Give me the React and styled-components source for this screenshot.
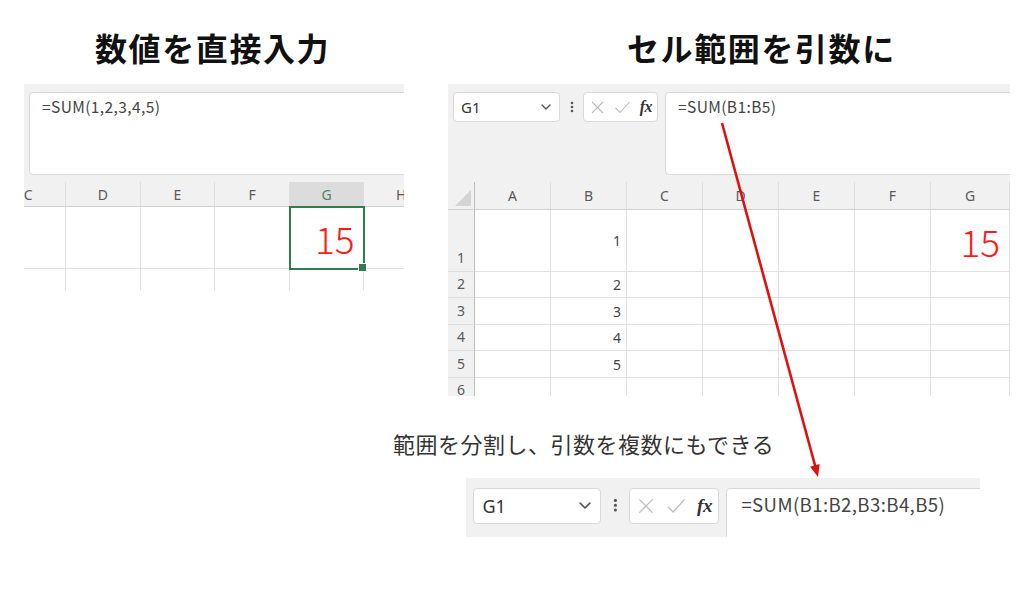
import React from 'react';
import styled, { createGlobalStyle } from 'styled-components';

const Global = createGlobalStyle`
  html, body { margin: 0; padding: 0; background: #fff; }
  body { font-family: "Noto Sans", "Noto Sans CJK JP", sans-serif; }
  * { box-sizing: border-box; }
`;

const Page = styled.div`
  position: relative;
  width: 1024px;
  height: 597px;
  overflow: hidden;
  background: #fff;
  display: flex;
  flex-direction: column;
`;

const TopRow = styled.div`
  display: flex;
  padding-left: 24px;
  gap: 44px;
`;

const Column = styled.div`
  width: ${(p) => p.$w}px;
  display: flex;
  flex-direction: column;
`;

const Title = styled.h1`
  margin: 0;
  height: 84px;
  padding-top: 10px;
  padding-left: ${(p) => p.$indent}px;
  display: flex;
  align-items: center;
  font-family: "Noto Sans CJK JP", sans-serif;
  font-weight: 700;
  font-size: 32px;
  letter-spacing: 1.6px;
  color: #111;
  white-space: nowrap;
`;

const Panel = styled.div`
  background: #f1f1f1;
  overflow: hidden;
  width: ${(p) => p.$w}px;
  height: ${(p) => p.$h}px;
`;

const FormulaArea = styled.div`
  display: flex;
  align-items: flex-start;
  padding: ${(p) => 8 * p.$s}px 0 ${(p) => p.$gapBottom}px ${(p) => p.$left}px;
`;

const NameBox = styled.div`
  flex: none;
  width: ${(p) => 107 * p.$s}px;
  height: ${(p) => 30 * p.$s}px;
  background: #fff;
  border: 1px solid #d9d9d9;
  border-radius: 4px;
  display: flex;
  align-items: center;
  justify-content: space-between;
  padding: 0 ${(p) => 8 * p.$s}px 0 ${(p) => 7 * p.$s}px;
  font-size: ${(p) => 15 * p.$s}px;
  color: #333;
`;

const Kebab = styled.div`
  flex: none;
  width: ${(p) => 23 * p.$s}px;
  height: ${(p) => 30 * p.$s}px;
  display: flex;
  align-items: center;
  justify-content: center;
`;

const FuncBox = styled.div`
  flex: none;
  width: ${(p) => 75 * p.$s}px;
  height: ${(p) => 30 * p.$s}px;
  background: #fff;
  border: 1px solid #d9d9d9;
  border-radius: 4px;
  display: flex;
  align-items: center;
  justify-content: space-between;
  padding: 0 ${(p) => 5 * p.$s}px 0 ${(p) => 6 * p.$s}px;
`;

const Fx = styled.span`
  font-family: "Liberation Serif", serif;
  font-style: italic;
  font-weight: 700;
  font-size: ${(p) => 16 * p.$s}px;
  color: #333;
  letter-spacing: -0.5px;
`;

const FormulaBox = styled.div`
  flex: 1;
  min-width: 0;
  margin-left: ${(p) => p.$ml}px;
  margin-right: -12px;
  height: ${(p) => p.$h}px;
  background: #fff;
  border: 1px solid #d9d9d9;
  border-radius: 4px;
  padding: ${(p) => 2 * p.$s}px 0 0 ${(p) => 12 * p.$s}px;
  font-family: "Noto Sans CJK JP", sans-serif;
  font-size: ${(p) => 15.5 * p.$s}px;
  line-height: ${(p) => 22 * p.$s}px;
  letter-spacing: 0.4px;
  color: #444;
  white-space: nowrap;
`;

const Sheet = styled.div`
  display: grid;
  grid-template-columns: ${(p) => p.$cols};
  grid-template-rows: ${(p) => p.$rows};
  margin-left: ${(p) => p.$offset || 0}px;
`;

const HeadCell = styled.div`
  background: ${(p) => (p.$active ? '#dcdcdc' : '#f1f1f1')};
  color: ${(p) => (p.$active ? '#58806a' : '#5a5a5a')};
  border-right: 1px solid #dedede;
  border-bottom: 1px solid #cfcfcf;
  display: flex;
  align-items: center;
  justify-content: center;
  font-size: 14px;
`;

const Corner = styled.div`
  background: #f1f1f1;
  border-right: 1px solid #bdbdbd;
  border-bottom: 1px solid #cfcfcf;
  display: flex;
  align-items: flex-end;
  justify-content: flex-end;
  padding: 0 3px 3px 0;
`;

const RowHead = styled.div`
  background: #f1f1f1;
  border-right: 1px solid #bdbdbd;
  border-bottom: 1px solid #dcdcdc;
  display: flex;
  align-items: flex-end;
  justify-content: center;
  padding-bottom: 3px;
  font-size: 14px;
  line-height: 20px;
  color: #5a5a5a;
`;

const Cell = styled.div`
  position: relative;
  background: #fff;
  border-right: 1px solid #e1e1e1;
  border-bottom: ${(p) => (p.$open ? 'none' : '1px solid #e1e1e1')};
  display: flex;
  align-items: center;
  justify-content: flex-end;
  padding-right: ${(p) => (p.$big ? 9 : 5)}px;
  font-size: ${(p) => (p.$big ? 37 : 14)}px;
  font-family: ${(p) => (p.$big ? '"Noto Sans CJK JP", sans-serif' : '"Noto Sans", sans-serif')};
  font-weight: ${(p) => (p.$big ? 300 : 400)};
  color: ${(p) => (p.$big ? '#ff1a1a' : '#444')};
  ${(p) =>
    p.$selected &&
    `
    outline: 2px solid #2f7d4d;
    outline-offset: -1px;
    z-index: 1;
    &::after {
      content: '';
      position: absolute;
      right: -4px;
      bottom: -4px;
      width: 7px;
      height: 7px;
      background: #2f7d4d;
      border: 1px solid #fff;
    }
  `}
`;

const Note = styled.p`
  margin: 32px 0 0 393px;
  font-family: "Noto Sans CJK JP", sans-serif;
  font-size: 22px;
  line-height: 30px;
  letter-spacing: 0.5px;
  color: #333;
  white-space: nowrap;
`;

const BottomPanel = styled.div`
  margin: 20px 0 0 466px;
  width: 514px;
  height: 59px;
  background: #f1f1f1;
  overflow: hidden;
`;

const Overlay = styled.svg`
  position: absolute;
  left: 0;
  top: 0;
  pointer-events: none;
`;

const Chevron = ({ s }) => (
  <svg width={10 * s} height={6 * s} viewBox="0 0 10 6">
    <path d="M1 1l4 4 4-4" fill="none" stroke="#555" strokeWidth="1.4" strokeLinecap="round" strokeLinejoin="round" />
  </svg>
);

const Dots = ({ s }) => (
  <svg width={4 * s} height={12 * s} viewBox="0 0 4 12">
    <circle cx="2" cy="2" r="1.3" fill="#555" />
    <circle cx="2" cy="6" r="1.3" fill="#555" />
    <circle cx="2" cy="10" r="1.3" fill="#555" />
  </svg>
);

const XIcon = ({ s }) => (
  <svg width={15 * s} height={15 * s} viewBox="0 0 15 15">
    <path d="M2 2l11 11M13 2L2 13" stroke="#bdbdbd" strokeWidth="1.1" fill="none" />
  </svg>
);

const CheckIcon = ({ s }) => (
  <svg width={17 * s} height={15 * s} viewBox="0 0 17 15">
    <path d="M1.5 8l4.5 4.5L15.5 2" stroke="#bdbdbd" strokeWidth="1.1" fill="none" />
  </svg>
);

const FormulaBar = ({ s, text, boxHeight, gapBottom, left, ml }) => (
  <FormulaArea $s={s} $gapBottom={gapBottom} $left={left}>
    <NameBox $s={s}>
      <span>G1</span>
      <Chevron s={s} />
    </NameBox>
    <Kebab $s={s}>
      <Dots s={s} />
    </Kebab>
    <FuncBox $s={s}>
      <XIcon s={s} />
      <CheckIcon s={s} />
      <Fx $s={s}>fx</Fx>
    </FuncBox>
    <FormulaBox $s={s} $h={boxHeight} $ml={ml}>
      {text}
    </FormulaBox>
  </FormulaArea>
);

const leftCols = ['C', 'D', 'E', 'F', 'G', 'H'];
const rightCols = ['A', 'B', 'C', 'D', 'E', 'F', 'G'];

export default function App() {
  return (
    <Page>
      <Global />
      <TopRow>
        <Column $w={380}>
          <Title $indent={71}>数値を直接入力</Title>
          <Panel $w={380} $h={206}>
            <FormulaArea $s={1} $gapBottom={7} $left={5}>
              <FormulaBox $s={1} $h={83} $ml={0}>
                =SUM(1,2,3,4,5)
              </FormulaBox>
            </FormulaArea>
            <Sheet $cols="repeat(6, 74.6px)" $rows="25px 62px 21px" $offset={-32.5}>
              {leftCols.map((c) => (
                <HeadCell key={c} $active={c === 'G'}>
                  {c}
                </HeadCell>
              ))}
              {leftCols.map((c) =>
                c === 'G' ? (
                  <Cell key={c} $big $selected>
                    15
                  </Cell>
                ) : (
                  <Cell key={c} />
                )
              )}
              {leftCols.map((c) => (
                <Cell key={'r2' + c} $open />
              ))}
            </Sheet>
          </Panel>
        </Column>
        <Column $w={562}>
          <Title $indent={179}>セル範囲を引数に</Title>
          <Panel $w={562} $h={312}>
            <FormulaBar s={1} text="=SUM(B1:B5)" boxHeight={83} gapBottom={7} left={5} ml={7} />
            <Sheet $cols="27px repeat(6, 76px) 79px" $rows="28px 62px 26px 27px 26px 27px 26px">
              <Corner>
                <svg width="16" height="16" viewBox="0 0 16 16">
                  <polygon points="16,0 16,16 0,16" fill="#d4d4d4" />
                </svg>
              </Corner>
              {rightCols.map((c) => (
                <HeadCell key={c}>{c}</HeadCell>
              ))}
              {[1, 2, 3, 4, 5, 6].map((r) => (
                <React.Fragment key={r}>
                  <RowHead>{r}</RowHead>
                  {rightCols.map((c) => {
                    if (c === 'B' && r <= 5) return <Cell key={c}>{r}</Cell>;
                    if (c === 'G' && r === 1)
                      return (
                        <Cell key={c} $big>
                          15
                        </Cell>
                      );
                    return <Cell key={c} />;
                  })}
                </React.Fragment>
              ))}
            </Sheet>
          </Panel>
        </Column>
      </TopRow>
      <Note>範囲を分割し、引数を複数にもできる</Note>
      <BottomPanel>
        <FormulaBar s={1.2} text="=SUM(B1:B2,B3:B4,B5)" boxHeight={70} gapBottom={0} left={7} ml={7} />
      </BottomPanel>
      <Overlay width="1024" height="597" viewBox="0 0 1024 597">
        <line x1="722" y1="123" x2="815.2" y2="466" stroke="#e01010" strokeWidth="2.6" />
        <polygon points="818,477 810.1,466.7 819.7,464.1" fill="#e01010" />
      </Overlay>
    </Page>
  );
}
